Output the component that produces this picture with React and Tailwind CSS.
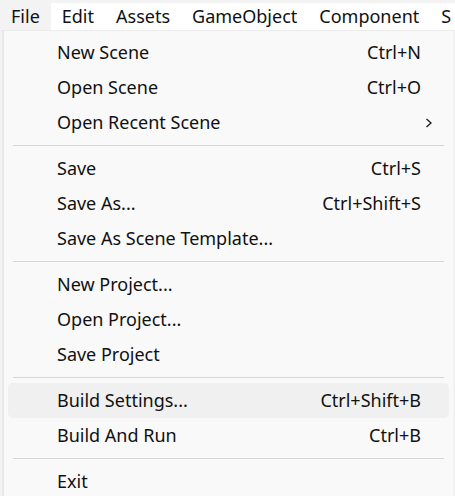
import React from "react";

const groups = [
  [
    { label: "New Scene", sc: "Ctrl+N" },
    { label: "Open Scene", sc: "Ctrl+O" },
    { label: "Open Recent Scene", arrow: true },
  ],
  [
    { label: "Save", sc: "Ctrl+S" },
    { label: "Save As...", sc: "Ctrl+Shift+S" },
    { label: "Save As Scene Template..." },
  ],
  [
    { label: "New Project..." },
    { label: "Open Project..." },
    { label: "Save Project" },
  ],
  [
    { label: "Build Settings...", sc: "Ctrl+Shift+B", hover: true },
    { label: "Build And Run", sc: "Ctrl+B" },
  ],
  [{ label: "Exit" }],
];

function Row({ item }) {
  return (
    <div
      className={
        "mx-[4px] h-[35px] flex items-center rounded-[5px] pl-[49px] pr-[28px] " +
        (item.hover ? "bg-[#f0f0f0]" : "")
      }
    >
      <span className="flex-1 whitespace-nowrap">{item.label}</span>
      {item.sc && <span className="whitespace-nowrap">{item.sc}</span>}
      {item.arrow && (
        <svg width="8" height="10" viewBox="0 0 8 10" className="mr-[-12px]">
          <path d="M1.5 1 L6 5 L1.5 9" fill="none" stroke="#1a1a1a" strokeWidth="1.3" />
        </svg>
      )}
    </div>
  );
}

export default function App() {
  return (
    <div
      className="w-[455px] h-[496px] overflow-hidden bg-[#f3f3f3] text-[#111111] text-[18px]"
      style={{ fontFamily: '"Noto Sans", sans-serif' }}
    >
      <div className="mt-[3px] h-[28px] bg-white border-b border-[#ececec] flex items-center whitespace-nowrap">
        <div className="h-full bg-[#f3f3f3] px-[11px] flex items-center">File</div>
        <div className="pl-[11px] pr-[11px]">Edit</div>
        <div className="pl-[11px] pr-[11px]">Assets</div>
        <div className="pl-[11px] pr-[11px]">GameObject</div>
        <div className="pl-[11px] pr-[11px]">Component</div>
        <div className="pl-[11px]">S</div>
      </div>
      <div className="ml-[2px] w-[451px] h-[470px] bg-[#f9f9f9] border-l-2 border-[#e8e8e8] pt-[4px]">
        {groups.map((g, gi) => (
          <div key={gi}>
            {gi > 0 && (
              <div className="h-[11px] flex items-center px-[9px]">
                <div className="h-px w-full bg-[#d6d6d6]" />
              </div>
            )}
            {g.map((it, i) => (
              <Row key={i} item={it} />
            ))}
          </div>
        ))}
      </div>
    </div>
  );
}
